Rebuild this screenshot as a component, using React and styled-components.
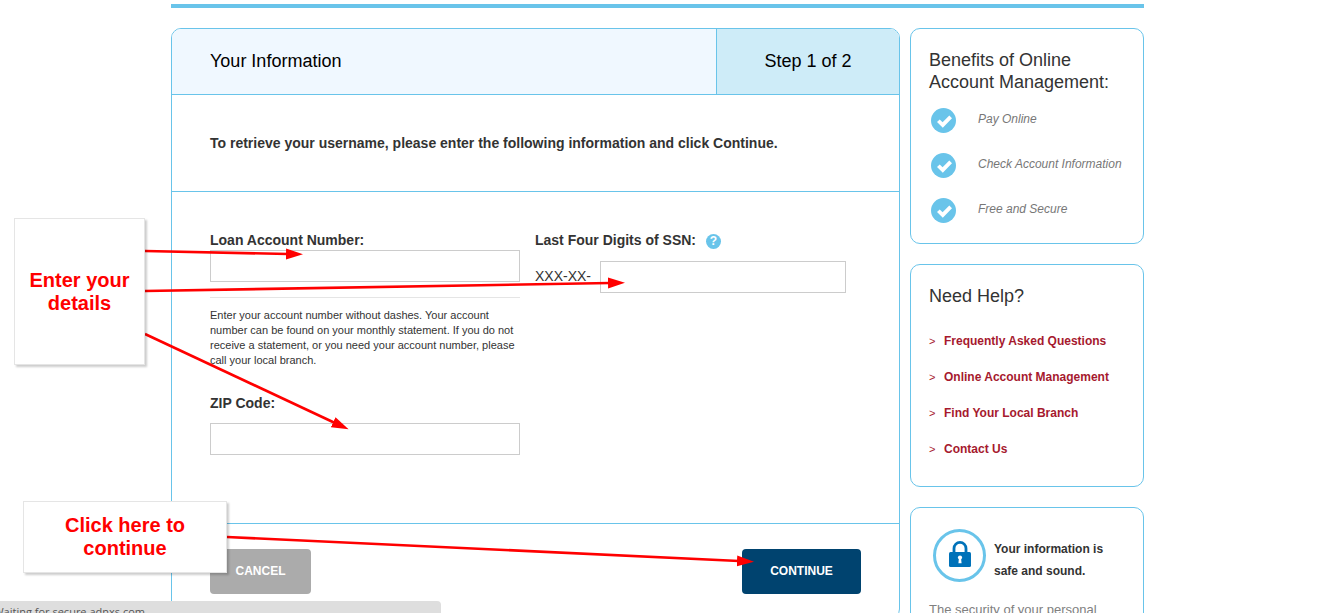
import React from 'react';
import styled, { createGlobalStyle } from 'styled-components';

const benefits = ['Pay Online', 'Check Account Information', 'Free and Secure'];
const helpLinks = ['Frequently Asked Questions', 'Online Account Management', 'Find Your Local Branch', 'Contact Us'];
const arrows = [
  'M145 251 L288 254',
  'M145 291 L610 283',
  'M145 334 L335 423',
  'M227 537 L739 561',
];

function CheckIcon() {
  return (
    <svg width="25" height="25" viewBox="0 0 25 25">
      <circle cx="12.5" cy="12.5" r="12.5" fill="#69c4ea" />
      <path d="M6 13.9 L8.7 11.4 L11.6 14.2 L18.3 7.5 L21 10.2 L11.8 19.8z" fill="#fff" />
    </svg>
  );
}

function LockIcon() {
  return (
    <svg width="53" height="53" viewBox="0 0 53 53">
      <circle cx="26.5" cy="26.5" r="25" fill="#fff" stroke="#69c4ea" strokeWidth="3" />
      <path d="M21 24 V19.5 a6 6.2 0 0 1 12 0 V24" fill="none" stroke="#0072b9" strokeWidth="2.8" />
      <rect x="16" y="23" width="22" height="15" rx="1.5" fill="#0072b9" />
      <circle cx="27" cy="28.6" r="2.1" fill="#fff" />
      <path d="M26 29 h2 l.6 5.2 h-3.2z" fill="#fff" />
    </svg>
  );
}

function App() {
  return (
    <StPage>
      <GlobalStyle />
      <StContainer>
        <StTopLine />
        <StColumns>
          <StCard as="main">
            <StHeader>
              <StTitle>Your Information</StTitle>
              <StStep>Step 1 of 2</StStep>
            </StHeader>
            <StIntro>To retrieve your username, please enter the following information and click Continue.</StIntro>
            <form onSubmit={(e) => e.preventDefault()}>
              <StFields>
                <div>
                  <StLabel htmlFor="account">Loan Account Number:</StLabel>
                  <StInput id="account" type="text" />
                  <StHint>
                    Enter your account number without dashes. Your account number can be found on your monthly
                    statement. If you do not receive a statement, or you need your account number, please call your
                    local branch.
                  </StHint>
                  <StLabel htmlFor="zip" $spaced>
                    ZIP Code:
                  </StLabel>
                  <StInput id="zip" type="text" />
                </div>
                <div>
                  <StLabelRow>
                    <StLabel htmlFor="ssn">Last Four Digits of SSN:</StLabel>
                    <StHelpButton type="button" aria-label="Help">
                      ?
                    </StHelpButton>
                  </StLabelRow>
                  <StSsnRow>
                    <span>XXX-XX-</span>
                    <StInput id="ssn" type="text" />
                  </StSsnRow>
                </div>
              </StFields>
              <StActions>
                <StButton type="button">CANCEL</StButton>
                <StButton type="submit" $primary>
                  CONTINUE
                </StButton>
              </StActions>
            </form>
          </StCard>

          <StSidebar>
            <StSideCard>
              <StSideTitle>Benefits of Online Account Management:</StSideTitle>
              <StBenefits>
                {benefits.map((text) => (
                  <StBenefit key={text}>
                    <CheckIcon />
                    <em>{text}</em>
                  </StBenefit>
                ))}
              </StBenefits>
            </StSideCard>
            <StSideCard>
              <StSideTitle>Need Help?</StSideTitle>
              <StLinks>
                {helpLinks.map((text) => (
                  <StLinkItem key={text}>
                    <span>&gt;</span>
                    <a href="#help">{text}</a>
                  </StLinkItem>
                ))}
              </StLinks>
            </StSideCard>
            <StSideCard>
              <StSafe>
                <LockIcon />
                <strong>
                  Your information is
                  <br />
                  safe and sound.
                </strong>
              </StSafe>
              <StSecurity>The security of your personal</StSecurity>
            </StSideCard>
          </StSidebar>
        </StColumns>
      </StContainer>

      <StStatus>
        <span>Waiting for secure.adnxs.com</span>
      </StStatus>

      <StArrows>
        <defs>
          <marker id="head" markerUnits="userSpaceOnUse" markerWidth="18" markerHeight="12" refX="2" refY="6" orient="auto">
            <path d="M0 0.5 L17 6 L0 11.5z" fill="#f00" />
          </marker>
        </defs>
        {arrows.map((d) => (
          <path key={d} d={d} stroke="#f00" strokeWidth="2.6" markerEnd="url(#head)" />
        ))}
      </StArrows>
      <StDetailsNote>Enter your details</StDetailsNote>
      <StContinueNote>Click here to continue</StContinueNote>
    </StPage>
  );
}

const GlobalStyle = createGlobalStyle`
  * {
    box-sizing: border-box;
  }
  body {
    margin: 0;
    background: #fff;
    color: #333;
    font-family: "Liberation Sans", Arial, sans-serif;
  }
`;

const StPage = styled.div`
  position: relative;
  height: 100vh;
  overflow: hidden;
  padding: 4px 19px 0 0;
`;

const StContainer = styled.div`
  max-width: 973px;
  margin: 0 auto;
`;

const StTopLine = styled.div`
  height: 4px;
  margin-bottom: 20px;
  background: #69c4ea;
`;

const StColumns = styled.div`
  display: grid;
  grid-template-columns: minmax(0, 1fr) 234px;
  align-items: start;
  gap: 10px;
`;

const StCard = styled.section`
  border: 1px solid #69c4ea;
  border-radius: 10px;
  overflow: hidden;
`;

const StHeader = styled.header`
  display: flex;
  height: 66px;
  border-bottom: 1px solid #69c4ea;
  background: #f0f8ff;
  color: #000;
  font-size: 18px;
  line-height: 64px;
`;

const StTitle = styled.h1`
  flex: 1;
  margin: 0;
  padding-left: 38px;
  font-size: 18px;
  font-weight: normal;
`;

const StStep = styled.div`
  width: 183px;
  border-left: 1px solid #69c4ea;
  background: #ceecf8;
  text-align: center;
`;

const StIntro = styled.p`
  margin: 0;
  padding: 38px;
  border-bottom: 1px solid #69c4ea;
  font-size: 14px;
  font-weight: bold;
  line-height: 20px;
`;

const StFields = styled.div`
  display: grid;
  grid-template-columns: 310fr 311fr;
  gap: 15px;
  padding: 40px 53px 68px 38px;
  border-bottom: 1px solid #69c4ea;
`;

const StLabel = styled.label`
  display: block;
  margin: ${(props) => (props.$spaced ? '27px 0 10px' : '0')};
  padding-bottom: 2px;
  font-size: 14px;
  font-weight: bold;
  line-height: 16px;
`;

const StInput = styled.input`
  display: block;
  width: 100%;
  height: 32px;
  padding: 0 8px;
  border: 1px solid #ccc;
  background: #fff;
  font-size: 14px;
`;

const StHint = styled.p`
  margin: 15px 0 0;
  padding-top: 10px;
  border-top: 1px solid #e5e5e5;
  font-size: 11px;
  line-height: 15px;
`;

const StLabelRow = styled.div`
  display: flex;
  align-items: center;
  gap: 10px;
  height: 18px;
`;

const StHelpButton = styled.button`
  width: 15px;
  height: 15px;
  padding: 0;
  border: none;
  border-radius: 50%;
  background: #69c4ea;
  color: #fff;
  font-family: inherit;
  font-size: 12px;
  font-weight: bold;
  line-height: 15px;
`;

const StSsnRow = styled.div`
  display: flex;
  align-items: center;
  margin-top: 11px;
  font-size: 14px;

  span {
    flex: 0 0 65px;
    padding-bottom: 2px;
  }
`;

const StActions = styled.div`
  display: flex;
  justify-content: space-between;
  padding: 25px 38px 24px;
`;

const StButton = styled.button`
  width: ${(props) => (props.$primary ? '119px' : '101px')};
  height: 45px;
  padding: 0 0 2px;
  border: none;
  border-radius: 4px;
  background: ${(props) => (props.$primary ? '#00436f' : '#ababab')};
  color: #fff;
  font-family: inherit;
  font-size: 12px;
  font-weight: bold;
  cursor: pointer;
`;

const StSidebar = styled.aside`
  display: flex;
  flex-direction: column;
  gap: 20px;
`;

const StSideCard = styled.section`
  padding: 20px 18px;
  border: 1px solid #69c4ea;
  border-radius: 10px;
`;

const StSideTitle = styled.h2`
  margin: 0;
  font-size: 18px;
  font-weight: normal;
  line-height: 22px;
`;

const StBenefits = styled.ul`
  display: grid;
  gap: 20px;
  margin: 15px 0 0;
  padding: 0 0 0 2px;
  list-style: none;
`;

const StBenefit = styled.li`
  display: flex;
  gap: 22px;
  height: 25px;
  color: #777;
  font-size: 12px;
  line-height: 22px;
  white-space: nowrap;
`;

const StLinks = styled.ul`
  margin: 16px 0 -1px;
  padding: 0;
  list-style: none;
`;

const StLinkItem = styled.li`
  display: flex;
  color: #a6192e;
  font-size: 12px;
  line-height: 36px;

  span {
    width: 15px;
    font-size: 11px;
  }
  a {
    color: inherit;
    font-weight: bold;
    text-decoration: none;
  }
`;

const StSafe = styled.div`
  display: flex;
  align-items: flex-end;
  gap: 8px;
  padding: 1px 0 0 4px;
  font-size: 12px;
  line-height: 22px;
`;

const StSecurity = styled.p`
  margin: 17px 0 0;
  color: #808080;
  font-size: 13px;
  line-height: 22px;
`;

const StStatus = styled.div`
  position: absolute;
  left: 0;
  bottom: 0;
  display: flex;
  justify-content: flex-end;
  width: 441px;
  height: 12px;
  padding-right: 296px;
  overflow: hidden;
  border-top-right-radius: 4px;
  background: #dedede;
  color: #555;
  font-family: 'Open Sans', sans-serif;
  font-size: 11px;
  line-height: 22px;
  white-space: nowrap;
`;

const StArrows = styled.svg`
  position: absolute;
  top: 0;
  left: 0;
  width: 100%;
  height: 100%;
  fill: none;
  pointer-events: none;
`;

const StNote = styled.div`
  position: absolute;
  display: flex;
  align-items: center;
  justify-content: center;
  border: 1px solid #e5e5e5;
  background: #fff;
  box-shadow: 2px 2px 2px rgba(0, 0, 0, 0.2);
  color: #f00;
  font-size: 20px;
  font-weight: bold;
  line-height: 23px;
  text-align: center;
`;

const StDetailsNote = styled(StNote)`
  top: 218px;
  left: 14px;
  width: 131px;
  height: 147px;
  padding: 0 12px;
`;

const StContinueNote = styled(StNote)`
  top: 501px;
  left: 23px;
  width: 204px;
  height: 72px;
  padding: 0 36px;
`;

export default App;
